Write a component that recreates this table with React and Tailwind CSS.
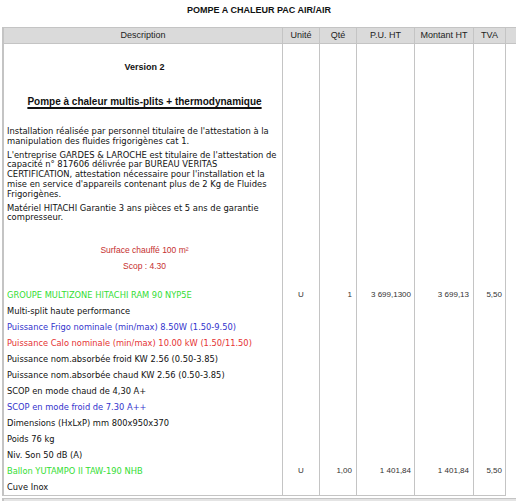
const VERDANA = "font-['DejaVu_Sans',Verdana,sans-serif]";
const ARIAL = "font-['Liberation_Sans',Arial,sans-serif]";

const HEADERS = ["Description", "Unité", "Qté", "P.U. HT", "Montant HT", "TVA"];

const LINES = [
  { text: "GROUPE MULTIZONE HITACHI RAM 90 NYP5E", color: "text-[#33dd33]", values: ["U", "1", "3 699,1300", "3 699,13", "5,50"] },
  { text: "Multi-split haute performance" },
  { text: "Puissance Frigo nominale (min/max) 8.50W (1.50-9.50)", color: "text-[#3333cc]" },
  { text: "Puissance Calo nominale (min/max) 10.00 kW (1.50/11.50)", color: "text-[#e53333]" },
  { text: "Puissance nom.absorbée froid KW 2.56 (0.50-3.85)" },
  { text: "Puissance nom.absorbée chaud KW 2.56 (0.50-3.85)" },
  { text: "SCOP en mode chaud de 4,30 A+" },
  { text: "SCOP en mode froid de 7.30 A++", color: "text-[#3333cc]" },
  { text: "Dimensions (HxLxP) mm 800x950x370" },
  { text: "Poids 76 kg" },
  { text: "Niv. Son 50 dB (A)" },
  { text: "Ballon YUTAMPO II TAW-190 NHB", color: "text-[#33dd33]", values: ["U", "1,00", "1 401,84", "1 401,84", "5,50"] },
  { text: "Cuve Inox" },
];

const GRID = "grid grid-cols-[281px_37px_37px_58px_59px_32px_1fr]";
const CELL = "border-r border-[#c4c4c4]";
const NUM = `${CELL} flex items-center text-[8px] text-[#333] ${ARIAL}`;

const Row = ({ line }) => {
  const v = line.values || ["", "", "", "", ""];
  return (
    <div className={`${GRID} h-[16px] items-stretch`}>
      <div className={`${CELL} border-l-2 flex items-center pl-[3px] text-[8.3px] whitespace-nowrap ${VERDANA} ${line.color || "text-[#111]"}`}>
        {line.text}
      </div>
      <div className={`${NUM} justify-center`}>{v[0]}</div>
      <div className={`${NUM} justify-end pr-[4px]`}>{v[1]}</div>
      <div className={`${NUM} justify-end pr-[3px]`}>{v[2]}</div>
      <div className={`${NUM} justify-end pr-[4px]`}>{v[3]}</div>
      <div className={`${NUM} justify-end pr-[3px]`}>{v[4]}</div>
      <div />
    </div>
  );
};

export default function App() {
  return (
    <div className="h-[501px] w-[516px] overflow-hidden bg-white pl-[2px]">
      <h1 className={`pt-[5px] text-center text-[9px] font-bold leading-[11px] text-[#111] ${ARIAL}`}>
        POMPE A CHALEUR PAC AIR/AIR
      </h1>

      <div className="mt-[11px]">
        <div className={`${GRID} h-[17px] border-y border-[#c4c4c4] bg-[#dadada]`}>
          {HEADERS.map((label, i) => (
            <div
              key={label}
              className={`${CELL} ${i === 0 ? "border-l-2" : ""} flex items-center justify-center text-[9px] text-[#222] ${ARIAL}`}
            >
              {label}
            </div>
          ))}
          <div />
        </div>

        <div className={`${GRID} h-[243px]`}>
          <div className={`${CELL} border-l-2 pl-[3px] text-[#111]`}>
            <p className={`pt-[18px] text-center text-[9px] font-bold leading-[11px] ${ARIAL}`}>Version 2</p>
            <p className={`mt-[22px] text-center text-[10px] font-bold leading-[13px] underline decoration-[1.5px] underline-offset-[2px] ${ARIAL}`}>
              Pompe à chaleur multis-plits + thermodynamique
            </p>
            <div className={`mt-[19px] whitespace-nowrap text-[8.4px] leading-[9.8px] ${VERDANA}`}>
              <p>
                Installation réalisée par personnel titulaire de l'attestation à la
                <br />
                manipulation des fluides frigorigènes cat 1.
              </p>
              <p className="mt-[4px]">
                L'entreprise GARDES &amp; LAROCHE est titulaire de l'attestation de
                <br />
                capacité n° 817606 délivrée par BUREAU VERITAS
                <br />
                CERTIFICATION, attestation nécessaire pour l'installation et la
                <br />
                mise en service d'appareils contenant plus de 2 Kg de Fluides
                <br />
                Frigorigènes.
              </p>
              <p className="mt-[4px]">
                Matériel HITACHI Garantie 3 ans pièces et 5 ans de garantie
                <br />
                compresseur.
              </p>
            </div>
            <p className={`mt-[22px] text-center text-[8.5px] leading-[10px] text-[#c62f2f] ${ARIAL}`}>Surface chauffé 100 m²</p>
            <p className={`mt-[6px] text-center text-[8.5px] leading-[10px] text-[#c62f2f] ${ARIAL}`}>Scop : 4.30</p>
          </div>
          <div className={CELL} />
          <div className={CELL} />
          <div className={CELL} />
          <div className={CELL} />
          <div className={CELL} />
          <div />
        </div>

        {LINES.map((line) => (
          <Row key={line.text} line={line} />
        ))}

        <div className={GRID}>
          <div className="col-span-6 border-t border-[#c4c4c4]" />
        </div>

        <div className="mt-[2px] h-[10px] border-l-2 border-t border-[#c4c4c4] bg-[#e4e4e4]" />
      </div>
    </div>
  );
}
